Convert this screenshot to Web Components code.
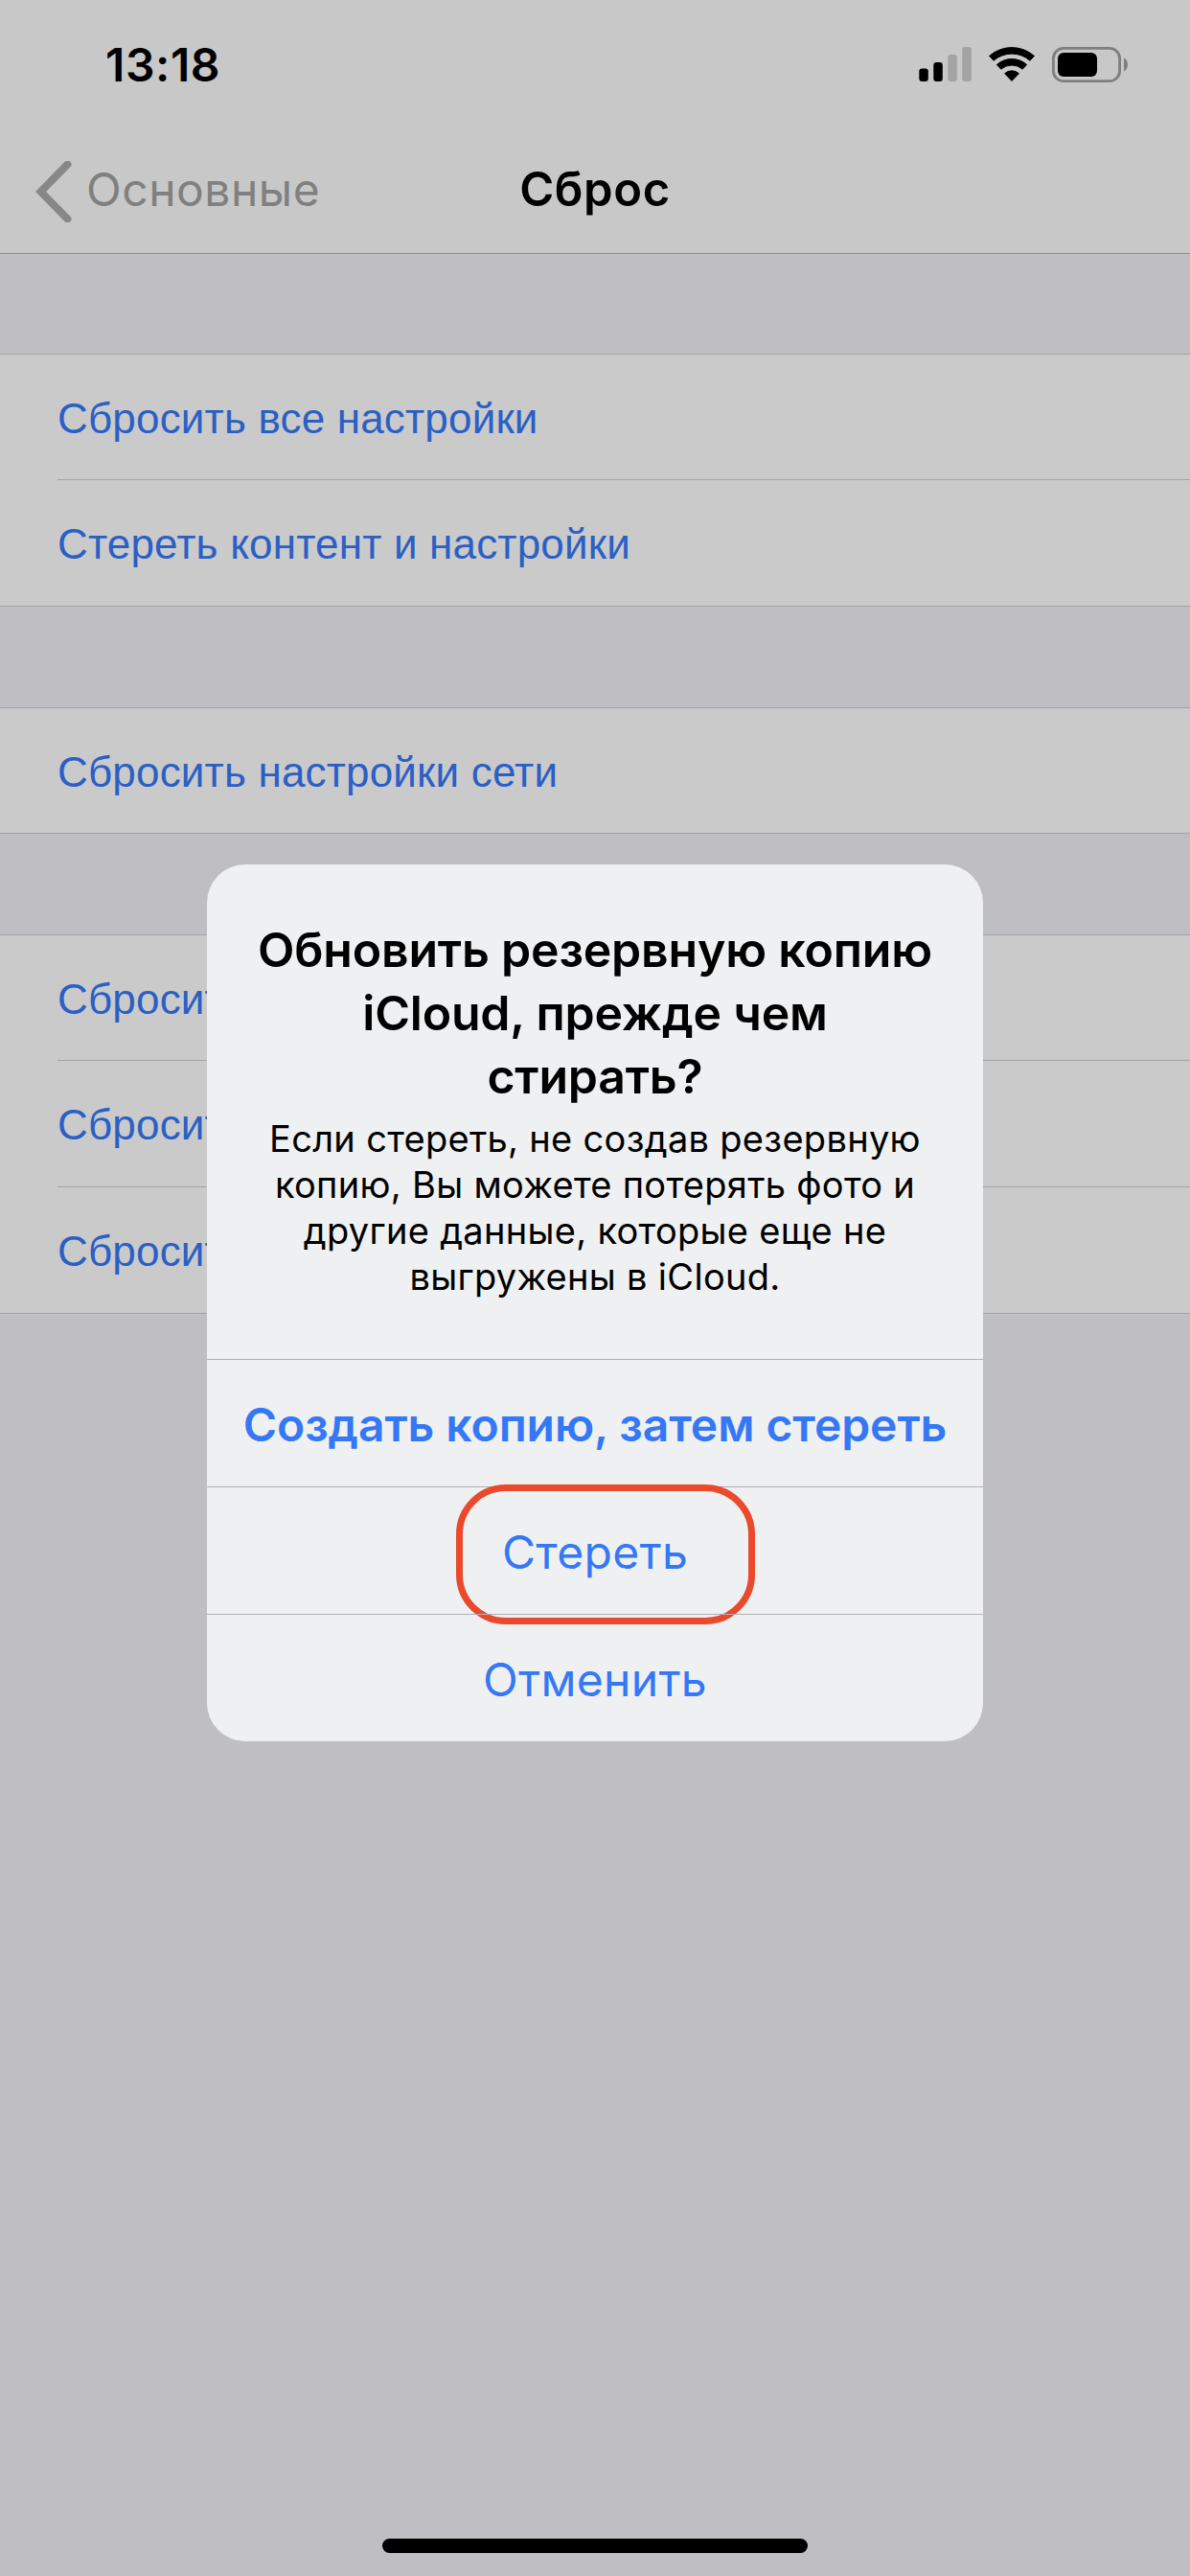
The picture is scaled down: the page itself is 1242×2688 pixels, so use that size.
<!DOCTYPE html>
<html lang="ru">
<head>
<meta charset="utf-8">
<title>Сброс</title>
<style>
html,body{margin:0;padding:0;background:#bfbec3}
</style>
</head>
<body>
<x-screen>
  <x-status-bar time="13:18"></x-status-bar>
  <x-nav-bar back="Основные" title="Сброс"></x-nav-bar>
  <x-group>
    <x-row>Сбросить все настройки</x-row>
    <x-row>Стереть контент и настройки</x-row>
  </x-group>
  <x-group>
    <x-row>Сбросить настройки сети</x-row>
  </x-group>
  <x-group>
    <x-row>Сбросить</x-row>
    <x-row>Сбросить</x-row>
    <x-row>Сбросить</x-row>
  </x-group>
  <x-alert slot="overlay">
    <span slot="title">Обновить резервную копию iCloud, прежде чем стирать?</span>
    <span slot="message">Если стереть, не создав резервную копию, Вы можете потерять фото и другие данные, которые еще не выгружены в iCloud.</span>
    <x-alert-button bold>Создать копию, затем стереть</x-alert-button>
    <x-alert-button ring>Стереть</x-alert-button>
    <x-alert-button>Отменить</x-alert-button>
  </x-alert>
  <x-home-indicator slot="overlay"></x-home-indicator>
</x-screen>
<script>
function def(name, html, init){
  customElements.define(name, class extends HTMLElement{
    constructor(){
      super();
      const root=this.attachShadow({mode:'open'});
      root.innerHTML=html;
      if(init) init(this,root);
    }
  });
}
def('x-screen',`<style>
:host{display:block;position:relative;width:1242px;height:2688px;overflow:hidden;background:#bfbec3;color:#000;font-family:Inter,"Liberation Sans",sans-serif}
</style><slot></slot><slot name="overlay"></slot>`);

def('x-status-bar',`<style>
:host{display:flex;align-items:center;justify-content:space-between;box-sizing:border-box;height:135px;padding:0 65px 0 110px;background:#c8c8c8}
.time{font:600 48px/58px Inter,sans-serif;letter-spacing:.6px;color:#000}
.icons{display:flex;align-items:center;gap:18px;margin-top:-1px}
svg{display:block}
</style>
<span class="time"></span>
<div class="icons">
  <svg width="55" height="36" viewBox="0 0 55 36" aria-hidden="true">
    <rect x="0.3" y="22.5" width="9.5" height="13.5" rx="3" fill="#000"/>
    <rect x="15.3" y="16" width="9.5" height="20" rx="3" fill="#000"/>
    <rect x="30.3" y="8" width="9.5" height="28" rx="3" fill="#a3a3a3"/>
    <rect x="45.3" y="0" width="9.5" height="36" rx="3" fill="#a3a3a3"/>
  </svg>
  <svg width="48" height="36" viewBox="0 0 48 36" aria-hidden="true" style="overflow:visible">
    <path fill="#000" stroke="#000" stroke-width="1" stroke-linejoin="round" d="M.6 9.4A35.5 35.5 0 0 1 47.4 9.4L43 14.2A29 29 0 0 0 5 14.2Z"/>
    <path fill="#000" stroke="#000" stroke-width="1" stroke-linejoin="round" d="M8.4 18.5A23.5 23.5 0 0 1 39.6 18.5L35.2 23.2A17 17 0 0 0 12.8 23.2Z"/>
    <path fill="#000" stroke="#000" stroke-width="1" stroke-linejoin="round" d="M16.6 27.7A11 11 0 0 1 31.4 27.7L24 35.4Z"/>
  </svg>
  <svg width="79" height="37" viewBox="0 0 79 37" aria-hidden="true">
    <rect x="1.4" y="1.4" width="69.2" height="34.2" rx="10.5" fill="none" stroke="#7f7f7f" stroke-width="2.8"/>
    <rect x="6" y="6" width="41" height="25" rx="6" fill="#000"/>
    <path d="M75 11.5C77.4 12.5 79 15.3 79 18.5S77.4 24.5 75 25.5Z" fill="#7f7f7f"/>
  </svg>
</div>`,(el,r)=>{r.querySelector('.time').textContent=el.getAttribute('time')});

def('x-nav-bar',`<style>
:host{display:grid;grid-template-columns:1fr auto 1fr;align-items:center;box-sizing:border-box;height:130px;padding:0 0 4px;background:#c8c8c8;border-bottom:1px solid #8c8c8c}
.back{display:flex;align-items:center;gap:15px;padding-left:37px;color:#808080;font:400 48px/58px Inter,sans-serif;letter-spacing:.5px}
.title{font:600 49px/60px Inter,sans-serif;letter-spacing:.6px;color:#000}
svg{display:block;margin-top:4px}
</style>
<div class="back">
  <svg width="38" height="64" viewBox="0 0 38 64" aria-hidden="true"><path d="M33.5 3.5 5.5 32l28 28.5" fill="none" stroke="#878787" stroke-width="8" stroke-linecap="round" stroke-linejoin="miter"/></svg>
  <span class="label"></span>
</div>
<div class="title"></div>
<div></div>`,(el,r)=>{
  r.querySelector('.label').textContent=el.getAttribute('back');
  r.querySelector('.title').textContent=el.getAttribute('title');
});

def('x-group',`<style>
:host{display:block;margin-top:105px;background:#cacaca;border-top:1px solid #a3a3a3;border-bottom:1px solid #a3a3a3}
:host(:first-of-type){margin-top:104px}
</style><slot></slot>`);

def('x-row',`<style>
:host{display:block;height:131px;padding-left:60px;background:#cacaca;color:#2a60c5;font:400 44px/130px "Liberation Sans",Arial,sans-serif;letter-spacing:.18px}
:host(:only-child){height:130px}
:host(:nth-child(2):not(:last-child)){height:132px}
.inner{box-sizing:border-box;height:100%;padding-top:2px;border-bottom:1px solid #a3a3a3;white-space:nowrap}
:host(:last-child) .inner{border-bottom:0}
</style><div class="inner"><slot></slot></div>`);

def('x-alert',`<style>
:host{display:block;position:absolute;left:216px;top:902px;width:810px;background:#eff0f2;border-radius:40px;text-align:center;overflow:hidden}
.head{box-sizing:border-box;height:516px;padding:56px 30px 0}
.title{font:600 50px/66px Inter,sans-serif;letter-spacing:-.2px;color:#000;padding:0 20px}
.msg{margin-top:8px;font:400 38px/48px Inter,sans-serif;letter-spacing:.3px;color:#000}
</style>
<div class="head">
  <div class="title"><slot name="title"></slot></div>
  <div class="msg"><slot name="message"></slot></div>
</div>
<slot></slot>`);

def('x-alert-button',`<style>
:host{display:block;position:relative;box-sizing:border-box;height:133px;padding-top:3px;border-top:1px solid #b0b0b2;color:#3478f6;font:400 48px/129px Inter,sans-serif;letter-spacing:.3px;text-align:center;white-space:nowrap}
:host([bold]){font-weight:600;letter-spacing:-.08px}
.ring{display:none;position:absolute;left:260px;top:-3px;box-sizing:border-box;width:312px;height:146px;border:7px solid #ea4a2b;border-radius:52px}
:host([ring]) .ring{display:block}
</style><slot></slot><div class="ring"></div>`);

def('x-home-indicator',`<style>
:host{display:block;position:absolute;left:399px;top:2649px;width:444px;height:15px;border-radius:8px;background:#000}
</style>`);
</script>
</body>
</html>
